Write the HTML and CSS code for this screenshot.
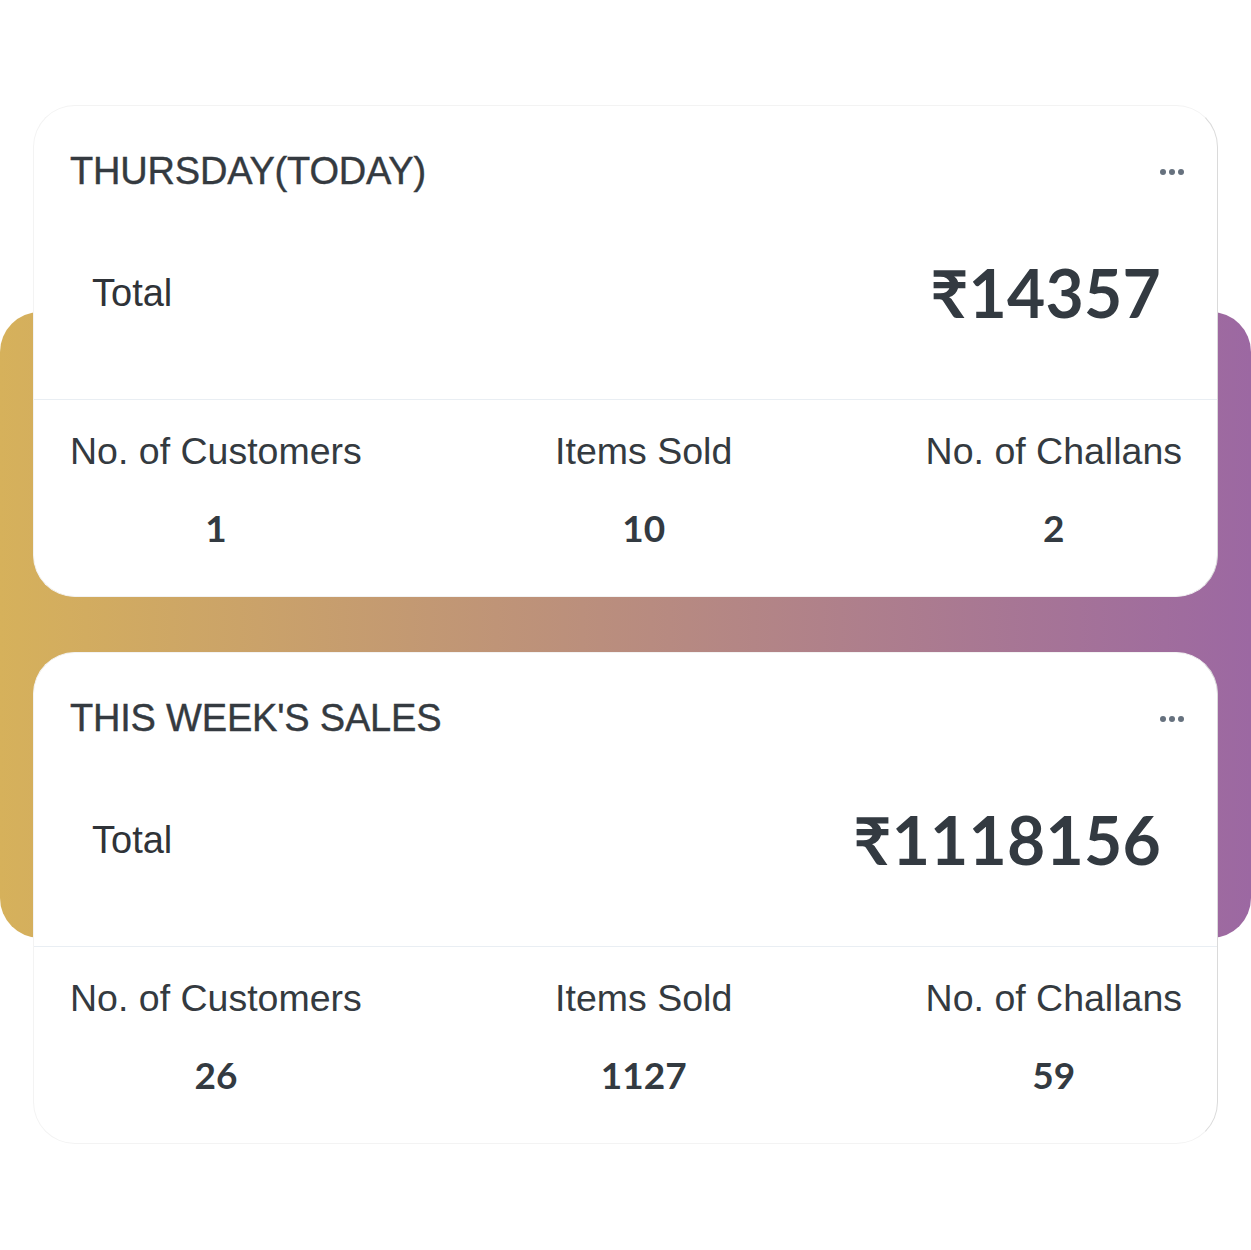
FILE: index.html
```html
<!DOCTYPE html>
<html lang="en">
<head>
<meta charset="utf-8">
<title>Sales summary</title>
<link rel="stylesheet" href="styles.css">
</head>
<body>
<main class="stage">
  <div class="band" aria-hidden="true"></div>

  <section class="card">
    <div class="card-top">
      <div class="title-row">
        <h2 class="title">THURSDAY(TODAY)</h2>
        <span class="more" aria-label="More"><i></i><i></i><i></i></span>
      </div>
      <div class="total-row">
        <span class="total-label">Total</span>
        <span class="total-value">₹14357</span>
      </div>
    </div>
    <div class="stats">
      <div class="stat"><div class="stat-label">No. of Customers</div><div class="stat-value">1</div></div>
      <div class="stat"><div class="stat-label">Items Sold</div><div class="stat-value">10</div></div>
      <div class="stat"><div class="stat-label">No. of Challans</div><div class="stat-value">2</div></div>
    </div>
  </section>

  <section class="card">
    <div class="card-top">
      <div class="title-row">
        <h2 class="title">THIS WEEK'S SALES</h2>
        <span class="more" aria-label="More"><i></i><i></i><i></i></span>
      </div>
      <div class="total-row">
        <span class="total-label">Total</span>
        <span class="total-value">₹1118156</span>
      </div>
    </div>
    <div class="stats">
      <div class="stat"><div class="stat-label">No. of Customers</div><div class="stat-value">26</div></div>
      <div class="stat"><div class="stat-label">Items Sold</div><div class="stat-value">1127</div></div>
      <div class="stat"><div class="stat-label">No. of Challans</div><div class="stat-value">59</div></div>
    </div>
  </section>
</main>
</body>
</html>
```

FILE: styles.css
```css
html, body {
  margin: 0;
  padding: 0;
  background: #ffffff;
}

body {
  color: #343a40;
  font-family: "Liberation Sans", Arial, sans-serif;
}

.stage {
  position: relative;
  padding: 105px 33px 0;
  min-height: 1145px;
}

.band {
  position: absolute;
  top: 312px;
  left: 0;
  right: 0;
  height: 626px;
  border-radius: 40px;
  background: linear-gradient(90deg, #d6b15b 0%, #9c68a2 100%);
}

.card {
  position: relative;
  box-sizing: border-box;
  height: 492px;
  background: #ffffff;
  border: 1px solid #f3f3f3;
  border-right-color: #dadada;
  border-radius: 42px;
  display: flex;
  flex-direction: column;
}

.card + .card {
  margin-top: 55px;
}

.card-top {
  box-sizing: border-box;
  height: 294px;
  padding: 41px 33px 0 36px;
  border-bottom: 1px solid #e9eef3;
}

.title-row {
  display: flex;
  align-items: center;
  justify-content: space-between;
  height: 48px;
}

.title {
  margin: 0;
  font-family: "Liberation Sans", Arial, sans-serif;
  font-weight: 400;
  font-size: 38px;
  line-height: 48px;
  letter-spacing: -0.2px;
  color: #343a40;
  -webkit-text-stroke: 0.4px #343a40;
}

.more {
  display: flex;
  gap: 3px;
  margin-top: 2px;
}

.more i {
  display: block;
  width: 6px;
  height: 6px;
  border-radius: 50%;
  background: #66717e;
}

.total-row {
  display: flex;
  align-items: center;
  justify-content: space-between;
  height: 90px;
  margin-top: 53px;
  padding: 0 23px 0 22px;
}

.total-label {
  font-size: 38px;
  color: #2f3338;
}

.total-value {
  font-family: Lato, "DejaVu Sans", sans-serif;
  font-weight: 700;
  font-size: 66px;
  line-height: 1.2;
  letter-spacing: 0.2px;
  color: #333a41;
}

.stats {
  flex: 1;
  display: flex;
  justify-content: space-between;
  padding: 29px 35px 0 36px;
}

.stat {
  text-align: center;
}

.stat-label {
  font-size: 37.5px;
  line-height: 44px;
  color: #343a40;
}

.stat-value {
  margin-top: 33px;
  font-family: Lato, "DejaVu Sans", sans-serif;
  font-weight: 700;
  font-size: 37px;
  line-height: 44px;
  color: #333a41;
}
```
